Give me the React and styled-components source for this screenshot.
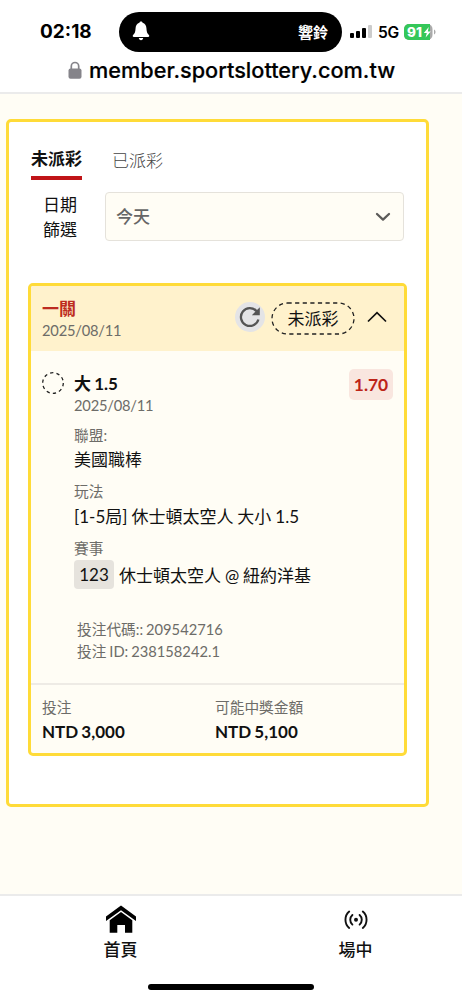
import React from "react";
import styled, { createGlobalStyle } from "styled-components";

const GlobalStyle = createGlobalStyle`
  * {
    box-sizing: border-box;
  }
  body {
    margin: 0;
    background-color: #fffdf5;
    color: #111;
    font-family: Lato, "Noto Sans CJK TC", sans-serif;
    font-size: 17px;
  }
`;

const Page = styled.div`
  display: flex;
  flex-direction: column;
  width: 462px;
  height: 1000px;
  overflow: hidden;
`;

/* 상단 상태바 + 주소창 */
const TopBar = styled.header`
  height: 94px;
  flex: none;
  background-color: #fff;
  border-bottom: 2px solid #ebebeb;
  font-family: Inter, "Noto Sans CJK TC", sans-serif;
  color: #000;
`;

const StatusBar = styled.div`
  display: flex;
  align-items: center;
  height: 40px;
  margin-top: 12px;
  padding-left: 40px;
`;

const Time = styled.div`
  width: 79px;
  padding-bottom: 1px;
  font-size: 19px;
  font-weight: 700;
`;

const Island = styled.div`
  display: flex;
  align-items: center;
  justify-content: space-between;
  width: 223px;
  height: 40px;
  padding: 0 14px 2px 13px;
  border-radius: 20px;
  background-color: #000;
  color: #fff;
  font-size: 15px;
  font-weight: 700;
`;

const Signal = styled.div`
  display: flex;
  align-items: flex-end;
  gap: 2px;
  margin: 0 0 1px 8px;
`;

const SignalBar = styled.i`
  width: 4px;
  height: ${({ $height }) => $height}px;
  border-radius: 1px;
  background-color: ${({ $off }) => ($off ? "#ccc" : "#000")};
`;

const Network = styled.div`
  width: 26px;
  margin-left: 6px;
  font-size: 15.6px;
  font-weight: 600;
  letter-spacing: -0.3px;
`;

const AddressBar = styled.div`
  display: flex;
  align-items: center;
  height: 36px;
  padding-left: 68px;
  font-size: 21.7px;
  font-weight: 500;
  -webkit-text-stroke: 0.2px #000;
  > svg {
    margin-right: 7px;
  }
`;

const Main = styled.main`
  flex: 1;
  padding: 25px 33px 0 6px;
`;

const Panel = styled.section`
  height: 688px;
  border: 3px solid #ffdb38;
  border-radius: 5px;
  background-color: #fff;
  padding: 25px 19px 0;
`;

const Tabs = styled.div`
  display: flex;
  gap: 30px;
  margin-left: 3px;
`;

const Tab = styled.div`
  height: 33px;
  padding-top: ${({ $active }) => ($active ? 0 : 2)}px;
  line-height: 24px;
  font-weight: ${({ $active }) => ($active ? 700 : 300)};
  color: ${({ $active }) => ($active ? "#111" : "#444")};
  border-bottom: ${({ $active }) => ($active ? "4px solid #c01418" : "0")};
`;

const Filter = styled.div`
  display: flex;
  align-items: center;
  height: 49px;
  margin-top: 12px;
`;

const FilterLabel = styled.label`
  width: 49px;
  margin-right: 28px;
  line-height: 25px;
  text-align: right;
`;

const Select = styled.div`
  display: flex;
  align-items: center;
  justify-content: space-between;
  width: 299px;
  height: 49px;
  padding: 0 12px 0 10px;
  border: 1px solid #e5e2db;
  border-radius: 4px;
  background-color: #fffdf5;
  color: #666;
  font-weight: 500;
`;

const SelectValue = styled.span`
  padding-bottom: 2px;
`;

const Card = styled.article`
  height: 473px;
  margin-top: 42px;
  width: 379px;
  border: 3px solid #ffdb38;
  border-radius: 5px;
  background-color: #fffdf5;
  overflow: hidden;
`;

const CardHeader = styled.div`
  display: flex;
  height: 65px;
  padding: 0 17px 1px 11px;
  align-items: center;
  background-color: #fff2cc;
`;

const CardTitle = styled.div`
  flex: 1;
  padding-top: 3px;
  line-height: 21px;
  font-weight: 700;
  color: #bd2c20;
`;

const SubText = styled.div`
  height: ${({ $height }) => $height || 22}px;
  line-height: ${({ $height }) => $height || 22}px;
  font-size: 14.7px;
  font-weight: 400;
  color: #6d6c68;
`;

const DateText = styled(SubText)`
  letter-spacing: -0.2px;
`;

const RefreshButton = styled.div`
  display: flex;
  align-items: center;
  justify-content: center;
  width: 30px;
  height: 30px;
  margin-bottom: 2px;
  border-radius: 50%;
  background-color: #e4e4e6;
`;

const StatusPill = styled.div`
  position: relative;
  width: 84px;
  height: 33px;
  margin: 0 12px 0 6px;
  line-height: 33px;
  text-align: center;
  > svg {
    position: absolute;
    inset: 0;
  }
`;

const Toggle = styled.div`
  display: flex;
  padding-bottom: 3px;
`;

const CardBody = styled.div`
  display: flex;
  height: 334px;
  padding: 18px 11px 0;
  border-bottom: 2px solid #eeebe5;
`;

const PickCircle = styled.div`
  width: 32px;
  padding-top: 3px;
`;

const Details = styled.div`
  flex: 1;
`;

const Pick = styled.div`
  height: 25px;
  line-height: 30px;
  font-weight: 700;
  word-spacing: -1px;
`;

const Odds = styled.div`
  width: 44px;
  height: 31px;
  border-radius: 5px;
  background-color: #f9e6df;
  color: #bd2418;
  font-size: 17.4px;
  font-weight: 700;
  line-height: 32px;
  text-align: center;
`;

const Field = styled.div`
  height: ${({ $height }) => $height || 57}px;
  padding-top: ${({ $top }) => $top || 0}px;
`;

const FieldValue = styled.div`
  display: flex;
  align-items: center;
  height: ${({ $height }) => $height || 26}px;
  white-space: pre;
  word-spacing: -0.4px;
`;

const GameNo = styled.span`
  width: 40px;
  height: 29px;
  margin-right: 5px;
  border-radius: 4px;
  background-color: #e6e3dd;
  font-size: 17px;
  line-height: 30px;
  text-align: center;
`;

const Codes = styled.div`
  margin: 29px 0 0 3px;
  word-spacing: -0.8px;
`;

const CardFooter = styled.div`
  display: flex;
  padding: 11px 11px 0;
`;

const Amount = styled.div`
  width: 173px;
  font-weight: 700;
  line-height: 27px;
  word-spacing: -1px;
`;

const BottomNav = styled.nav`
  display: flex;
  flex: none;
  height: 106px;
  padding: 0 0 0 3px;
  border-top: 2px solid #ebebeb;
  background-color: #fff;
`;

const NavItem = styled.div`
  display: flex;
  flex-direction: column;
  align-items: center;
  width: 235px;
  flex: none;
  padding-top: 8px;
  line-height: 24px;
  font-weight: 500;
  > svg {
    margin-bottom: 4px;
  }
`;

const HomeIndicator = styled.div`
  position: absolute;
  top: 984px;
  left: 148px;
  width: 166px;
  height: 6px;
  border-radius: 3px;
  background-color: #000;
`;

const BellIcon = () => (
  <svg width="18" height="20" viewBox="0 0 18 20" fill="#fff">
    <path d="M9 .5c.8 0 1.400.5 1.600 1.300 2.400.7 3.700 2.700 3.800 5.200.2 4 .8 5.400 2.500 7.100.8.8.4 2-.8 2H1.900c-1.200 0-1.600-1.200-.8-2 1.700-1.700 2.300-3.100 2.500-7.100.1-2.500 1.400-4.500 3.800-5.200C7.600 1 8.200.5 9 .5Z" />
    <path d="M6.800 17h4.400c-.2 1.400-1 2.200-2.200 2.200S7 18.400 6.800 17Z" />
  </svg>
);

const BatteryIcon = () => (
  <svg width="32" height="16" viewBox="0 0 32 16">
    <rect width="28.500" height="16" rx="5" fill="#aaa" />
    <path d="M5 0h21v16H5a5 5 0 0 1-5-5V5a5 5 0 0 1 5-5Z" fill="#34c759" />
    <path d="M30 5.500c2 .8 2 4.200 0 5Z" fill="#aaa" />
    <text
      x="3"
      y="12.800"
      fill="#fff"
      fontFamily="Inter, sans-serif"
      fontWeight="800"
      fontSize="13.500"
    >
      91
    </text>
    <path d="m24.800 3-5 6h3l-1.200 4.500 5.200-6h-3Z" fill="#fff" />
  </svg>
);

const LockIcon = () => (
  <svg width="14" height="18" viewBox="0 0 14 18">
    <path
      d="M3.300 9V5.200a3.700 3.700 0 0 1 7.400 0V9"
      fill="none"
      stroke="#85848a"
      strokeWidth="1.700"
    />
    <rect x=".5" y="7.500" width="13" height="10.300" rx="2" fill="#85848a" />
  </svg>
);

const ChevronDown = () => (
  <svg width="16" height="10" viewBox="0 0 16 10" fill="none">
    <path
      d="m2 2 6 5.600L14 2"
      stroke="#5c5b59"
      strokeWidth="2.300"
      strokeLinecap="round"
      strokeLinejoin="round"
    />
  </svg>
);

const ChevronUp = () => (
  <svg width="20" height="12" viewBox="0 0 20 12" fill="none">
    <path d="m1 10.500 9-8.800 9 8.800" stroke="#111" strokeWidth="1.700" />
  </svg>
);

const RefreshIcon = () => (
  <svg width="22" height="22" viewBox="0 0 22 22">
    <path
      d="M17.600 5.200A8.900 8.900 0 1 0 19.400 13.500"
      fill="none"
      stroke="#555"
      strokeWidth="2.300"
    />
    <path d="M20.800 1.200v8h-8Z" fill="#555" />
  </svg>
);

const HomeIcon = () => (
  <svg width="32" height="30" viewBox="0 0 32 30">
    <path d="M16 1.500 31 12.500V17L16 6.200 1 17V12.500Z" />
    <path d="m16 8 11.300 8.200v12.600h-7.300V21h-7.700v7.800H4.700V16.200Z" />
  </svg>
);

const LiveIcon = () => (
  <svg
    width="24"
    height="30"
    viewBox="0 0 24 30"
    fill="none"
    stroke="#111"
    strokeWidth="1.900"
    strokeLinecap="round"
  >
    <path d="M5.200 7.500c-5 4.200-5 12.200 0 16.400M18.800 7.500c5 4.200 5 12.200 0 16.400" />
    <path d="M8.400 11c-2.900 2.600-2.900 7 0 9.600M15.600 11c2.900 2.600 2.900 7 0 9.600" />
    <circle cx="12" cy="15.800" r="2" fill="#111" stroke="none" />
  </svg>
);

const amounts = [
  { label: "投注", value: "NTD 3,000" },
  { label: "可能中獎金額", value: "NTD 5,100" },
];

const BetCard = () => (
  <Card>
    <CardHeader>
      <CardTitle>
        一關
        <DateText>2025/08/11</DateText>
      </CardTitle>
      <RefreshButton>
        <RefreshIcon />
      </RefreshButton>
      <StatusPill>
        <svg width="84" height="33" fill="none">
          <rect
            x="1"
            y="1"
            width="82"
            height="31"
            rx="15.500"
            stroke="#222"
            strokeWidth="1.300"
            strokeDasharray="4.200 3.400"
          />
        </svg>
        未派彩
      </StatusPill>
      <Toggle>
        <ChevronUp />
      </Toggle>
    </CardHeader>
    <CardBody>
      <PickCircle>
        <svg width="22" height="22" fill="none">
          <circle
            cx="11"
            cy="11"
            r="10.300"
            stroke="#222"
            strokeWidth="1.300"
            strokeDasharray="3.300 3.170"
          />
        </svg>
      </PickCircle>
      <Details>
        <Pick>大 1.5</Pick>
        <DateText $height={23}>2025/08/11</DateText>
        <Field $height={63} $top={7}>
          <SubText>聯盟:</SubText>
          <FieldValue $height={24}>美國職棒</FieldValue>
        </Field>
        <Field>
          <SubText>玩法</SubText>
          <FieldValue>[1-5局] 休士頓太空人 大小 1.5</FieldValue>
        </Field>
        <Field $height={52}>
          <SubText $height={23}>賽事</SubText>
          <FieldValue $height={29}>
            <GameNo>123</GameNo>
            休士頓太空人 @ 紐約洋基
          </FieldValue>
        </Field>
        <Codes>
          <SubText>投注代碼:: 209542716</SubText>
          <SubText>投注 ID: 238158242.1</SubText>
        </Codes>
      </Details>
      <Odds>1.70</Odds>
    </CardBody>
    <CardFooter>
      {amounts.map(({ label, value }) => (
        <Amount key={label}>
          <SubText>{label}</SubText>
          {value}
        </Amount>
      ))}
    </CardFooter>
  </Card>
);

const App = () => {
  return (
    <Page>
      <GlobalStyle />
      <TopBar>
        <StatusBar>
          <Time>02:18</Time>
          <Island>
            <BellIcon />
            響鈴
          </Island>
          <Signal>
            <SignalBar $height={5} />
            <SignalBar $height={7} />
            <SignalBar $height={10} />
            <SignalBar $height={13} $off />
          </Signal>
          <Network>5G</Network>
          <BatteryIcon />
        </StatusBar>
        <AddressBar>
          <LockIcon />
          member.sportslottery.com.tw
        </AddressBar>
      </TopBar>
      <Main>
        <Panel>
          <Tabs>
            <Tab $active>未派彩</Tab>
            <Tab>已派彩</Tab>
          </Tabs>
          <Filter>
            <FilterLabel>
              日期
              <br />
              篩選
            </FilterLabel>
            <Select>
              <SelectValue>今天</SelectValue>
              <ChevronDown />
            </Select>
          </Filter>
          <BetCard />
        </Panel>
      </Main>
      <BottomNav>
        <NavItem>
          <HomeIcon />
          首頁
        </NavItem>
        <NavItem>
          <LiveIcon />
          場中
        </NavItem>
      </BottomNav>
      <HomeIndicator />
    </Page>
  );
};

export default App;
